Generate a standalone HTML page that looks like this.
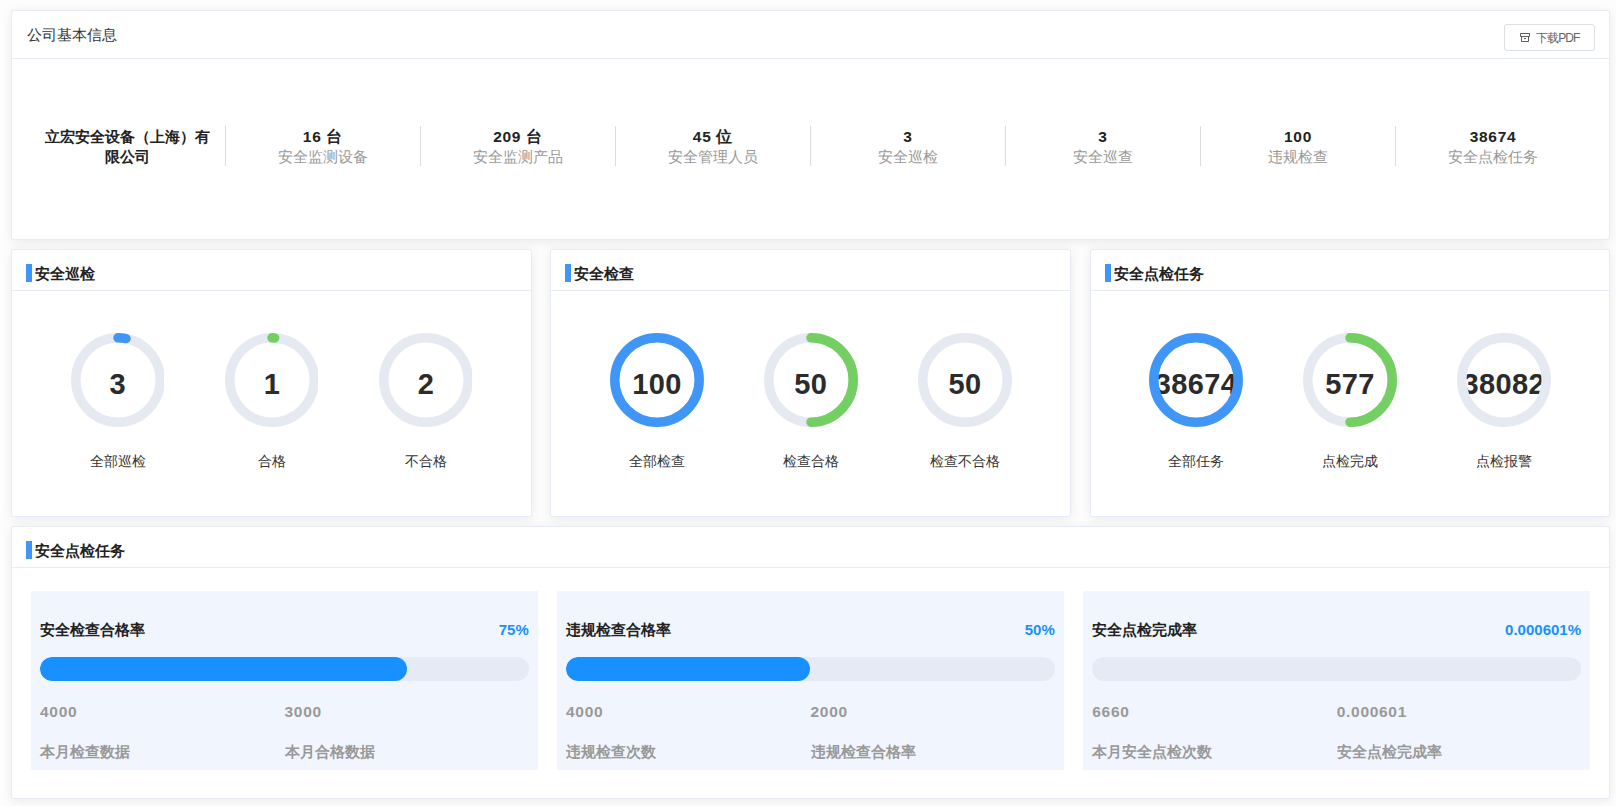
<!DOCTYPE html>
<html><head><meta charset="utf-8">
<style>
*{box-sizing:border-box;margin:0;padding:0}
html,body{width:1616px;height:806px;overflow:hidden;background:#fdfdfd;font-family:"Liberation Sans",sans-serif;color:#303133}
.card{position:absolute;background:#fff;border:1px solid #e6ebf5;border-radius:3px;box-shadow:0 2px 12px 0 rgba(0,0,0,.08);overflow:hidden}
.hd{position:absolute;left:0;right:0;top:0;border-bottom:1px solid #e6ebf5}
.t1{position:absolute;left:15px;top:14px;font-size:15px;line-height:20px;color:#333}
.btn{position:absolute;left:1492px;top:13px;width:91px;height:27px;border:1px solid #dcdfe6;border-radius:3px;background:#fff;font-size:12px;color:#606266}
.btn span{position:absolute;left:31px;top:6px;line-height:14px;letter-spacing:-0.9px}
.btn svg{position:absolute;left:15px;top:8px}
.item{position:absolute;top:115px;height:40px;width:195px;text-align:center;font-size:15px;line-height:20px}
.item.bl{border-left:1px solid #dcdcdc}
.item b{display:block;color:#222;font-weight:bold;position:relative;top:1px}
.item b.n{font-size:15.5px;letter-spacing:0.7px}
.item i{display:block;font-style:normal;color:#999;position:relative;top:1px}
.stt{position:absolute;left:14px;top:14px;font-size:15px;line-height:20px;font-weight:bold;color:#222;padding-left:9px}
.stt:before{content:"";position:absolute;left:0;top:0;width:6px;height:18px;background:#4096f7}
.g{position:absolute;top:0;width:94px;height:94px}
.g .num{position:absolute;left:-20px;right:-20px;top:3.5px;height:94px;text-align:center;font-size:29px;font-weight:bold;line-height:94px;color:#2b2b2b;letter-spacing:0.4px}
.g svg{position:absolute;left:0;top:0}
.glab{position:absolute;width:154px;text-align:center;font-size:14px;line-height:16px;color:#333}
.panel{position:absolute;top:64px;width:506.75px;height:179px;background:#f1f5fd}
.ptitle{position:absolute;left:9px;top:30px;font-size:15px;line-height:18px;font-weight:bold;color:#222}
.pct{position:absolute;right:9px;top:30px;font-size:15px;line-height:18px;font-weight:bold;color:#1890ff}
.bar{position:absolute;left:9px;right:9px;top:66px;height:24px;border-radius:12px;background:#e5eaf4;overflow:hidden}
.bar div{height:24px;border-radius:12px;background:#1890ff}
.pv{position:absolute;top:111.5px;font-size:15.5px;line-height:18px;font-weight:bold;color:#999;letter-spacing:0.7px}
.pl{position:absolute;top:152px;font-size:15px;line-height:18px;font-weight:bold;color:#999}
</style></head><body>

<!-- Card 1 -->
<div class="card" style="left:11px;top:10px;width:1599px;height:230px">
  <div class="hd" style="height:48px">
    <div class="t1">公司基本信息</div>
    <div class="btn"><svg width="11" height="10" viewBox="0 0 11 10"><path d="M0.5 0.5H9.5V3.5H0.5Z M1.5 3.5V8.5H8.5V3.5 M4 5.5H6" fill="none" stroke="#5a5c60" stroke-width="1"/></svg><span>下载PDF</span></div>
  </div>
  <div class="item" style="left:18px;font-weight:bold;color:#222"><b>立宏安全设备（上海）有</b><b>限公司</b></div>
  <div class="item bl" style="left:213px"><b class="n">16 台</b><i>安全监测设备</i></div>
  <div class="item bl" style="left:408px"><b class="n">209 台</b><i>安全监测产品</i></div>
  <div class="item bl" style="left:603px"><b class="n">45 位</b><i>安全管理人员</i></div>
  <div class="item bl" style="left:798px"><b class="n">3</b><i>安全巡检</i></div>
  <div class="item bl" style="left:993px"><b class="n">3</b><i>安全巡查</i></div>
  <div class="item bl" style="left:1188px"><b class="n">100</b><i>违规检查</i></div>
  <div class="item bl" style="left:1383px"><b class="n">38674</b><i>安全点检任务</i></div>
</div>

<!-- Row 2 -->
<div class="card" style="left:11px;top:249px;width:521px;height:268px">
  <div class="hd" style="height:41px"><div class="stt">安全巡检</div></div>
  <div class="g" style="left:58.75px;top:83px"><div class="num">3</div><svg width="93" height="94"><circle cx="47" cy="47" r="42.2" fill="none" stroke="#e4e9f2" stroke-width="9.5"/><path d="M47 4.8 A42.2 42.2 0 0 1 55 5.6" fill="none" stroke="#4096f7" stroke-width="9.5" stroke-linecap="round"/></svg></div>
  <div class="glab" style="left:28.75px;top:202.5px">全部巡检</div>
  <div class="g" style="left:212.9px;top:83px"><div class="num">1</div><svg width="93" height="94"><circle cx="47" cy="47" r="42.2" fill="none" stroke="#e4e9f2" stroke-width="9.5"/><path d="M47 4.8 A42.2 42.2 0 0 1 49.6 4.9" fill="none" stroke="#74cf62" stroke-width="9.5" stroke-linecap="round"/></svg></div>
  <div class="glab" style="left:182.9px;top:202.5px">合格</div>
  <div class="g" style="left:367px;top:83px"><div class="num">2</div><svg width="93" height="94"><circle cx="47" cy="47" r="42.2" fill="none" stroke="#e4e9f2" stroke-width="9.5"/></svg></div>
  <div class="glab" style="left:337px;top:202.5px">不合格</div>
</div>

<div class="card" style="left:550px;top:249px;width:521px;height:268px">
  <div class="hd" style="height:41px"><div class="stt">安全检查</div></div>
  <div class="g" style="left:59px;top:83px"><div class="num">100</div><svg width="94" height="94"><circle cx="47" cy="47" r="42.2" fill="none" stroke="#4096f7" stroke-width="9.5"/></svg></div>
  <div class="glab" style="left:29px;top:202.5px">全部检查</div>
  <div class="g" style="left:212.8px;top:83px"><div class="num">50</div><svg width="94" height="94"><circle cx="47" cy="47" r="42.2" fill="none" stroke="#e4e9f2" stroke-width="9.5"/><path d="M47 4.8 A42.2 42.2 0 0 1 47 89.2" fill="none" stroke="#74cf62" stroke-width="9.5" stroke-linecap="round"/></svg></div>
  <div class="glab" style="left:182.8px;top:202.5px">检查合格</div>
  <div class="g" style="left:367px;top:83px"><div class="num">50</div><svg width="94" height="94"><circle cx="47" cy="47" r="42.2" fill="none" stroke="#e4e9f2" stroke-width="9.5"/></svg></div>
  <div class="glab" style="left:337px;top:202.5px">检查不合格</div>
</div>

<div class="card" style="left:1090px;top:249px;width:520px;height:268px">
  <div class="hd" style="height:41px"><div class="stt">安全点检任务</div></div>
  <div class="g" style="left:58px;top:83px"><div class="num">38674</div><svg width="94" height="94"><circle cx="47" cy="47" r="42.2" fill="none" stroke="#4096f7" stroke-width="9.5"/></svg></div>
  <div class="glab" style="left:28px;top:202.5px">全部任务</div>
  <div class="g" style="left:212px;top:83px"><div class="num">577</div><svg width="94" height="94"><circle cx="47" cy="47" r="42.2" fill="none" stroke="#e4e9f2" stroke-width="9.5"/><path d="M47 4.8 A42.2 42.2 0 0 1 47 89.2" fill="none" stroke="#74cf62" stroke-width="9.5" stroke-linecap="round"/></svg></div>
  <div class="glab" style="left:182px;top:202.5px">点检完成</div>
  <div class="g" style="left:365.8px;top:83px"><div class="num">38082</div><svg width="94" height="94"><circle cx="47" cy="47" r="42.2" fill="none" stroke="#e4e9f2" stroke-width="9.5"/></svg></div>
  <div class="glab" style="left:335.8px;top:202.5px">点检报警</div>
</div>

<!-- Card 5 -->
<div class="card" style="left:11px;top:526px;width:1599px;height:273px">
  <div class="hd" style="height:41px"><div class="stt">安全点检任务</div></div>
  <div class="panel" style="left:19px">
    <div class="ptitle">安全检查合格率</div><div class="pct">75%</div>
    <div class="bar"><div style="width:75%"></div></div>
    <div class="pv" style="left:9px">4000</div><div class="pv" style="left:253.5px">3000</div>
    <div class="pl" style="left:9px">本月检查数据</div><div class="pl" style="left:253.5px">本月合格数据</div>
  </div>
  <div class="panel" style="left:545px">
    <div class="ptitle">违规检查合格率</div><div class="pct">50%</div>
    <div class="bar"><div style="width:50%"></div></div>
    <div class="pv" style="left:9px">4000</div><div class="pv" style="left:253.5px">2000</div>
    <div class="pl" style="left:9px">违规检查次数</div><div class="pl" style="left:253.5px">违规检查合格率</div>
  </div>
  <div class="panel" style="left:1071.25px">
    <div class="ptitle">安全点检完成率</div><div class="pct">0.000601%</div>
    <div class="bar"><div style="width:0%"></div></div>
    <div class="pv" style="left:9px">6660</div><div class="pv" style="left:253.5px">0.000601</div>
    <div class="pl" style="left:9px">本月安全点检次数</div><div class="pl" style="left:253.5px">安全点检完成率</div>
  </div>
</div>

</body></html>
